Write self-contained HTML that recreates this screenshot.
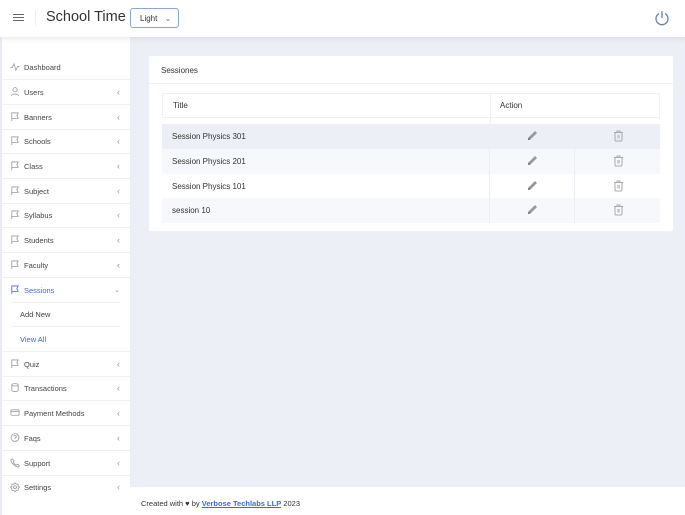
<!DOCTYPE html>
<html><head><meta charset="utf-8"><style>
*{box-sizing:border-box;margin:0;padding:0}
body{width:685px;height:515px;overflow:hidden;background:#eceff6;font-family:"Liberation Sans",sans-serif;position:relative;color:#333}
.hdr{position:absolute;left:0;top:0;width:685px;height:37px;background:#fff;box-shadow:0 2px 6px rgba(0,0,0,.08);z-index:2}
.side{position:absolute;left:2px;top:37px;width:128px;height:478px;background:#fff}
.it{position:absolute;left:2px;width:118px;height:24px;font-size:7.5px;color:#444;display:flex;align-items:center}
.it .ic{position:absolute;left:8px;top:7px;width:10px;height:10px}
.it .t{position:absolute;left:22px}
.it .ch{position:absolute;right:0;color:#999;font-size:9px}
.ln{position:absolute;left:12px;width:108px;height:1px;background:#f0f0f3}
.card{position:absolute;left:149px;top:56px;width:524px;height:175px;background:#fff;border-radius:2px}
.row{position:absolute;left:162px;width:498px;font-size:8px;color:#333}
.row span{position:absolute;left:10px;top:8px}
.foot{position:absolute;left:130px;top:487px;width:555px;height:28px;background:#fff;font-size:7.5px;color:#333;padding:12px 0 0 11px}
</style></head><body>
<div class="hdr">
 <div style="position:absolute;left:13px;top:14px;width:11px;height:1.3px;background:#666;box-shadow:0 3px 0 #666,0 6px 0 #666"></div>
 <div style="position:absolute;left:35px;top:10px;width:1px;height:16px;background:#eee"></div>
 <div style="position:absolute;left:46px;top:9px;font-size:14.5px;color:#333">School Time</div>
 <div style="position:absolute;left:130px;top:8px;width:49px;height:20px;border:1px solid #8aa4e8;border-radius:3px;font-size:8px;padding:5px 0 0 9px;color:#333">Light <span style="margin-left:5px;color:#777">⌄</span></div>
 <svg style="position:absolute;left:654px;top:10px" width="16" height="16" viewBox="0 0 16 16" fill="none" stroke="#6b7fa8" stroke-width="1.3" stroke-linecap="round"><path d="M8 1.5v6"/><path d="M4.5 3.8a6 6 0 1 0 7 0"/></svg>
</div>
<div class="side"></div>
<div style="position:absolute;left:0;top:37px;width:2px;height:478px;background:#e8ebf2"></div>
<div id="nav"></div>
<div class="card">
 <div style="position:absolute;left:12px;top:10px;font-size:8px;color:#333">Sessiones</div>
 <div style="position:absolute;left:0;top:27px;width:524px;height:1px;background:#f1f2f6"></div>
</div>
<div class="row" style="top:93px;height:25px;border:1px solid #f0f1f5;background:#fff"><span style="top:7px">Title</span><span style="left:337px;top:7px">Action</span><div style="position:absolute;left:327px;top:0;width:1px;height:31px;background:#f0f1f5"></div></div>
<div class="row" style="top:124px;height:25px;background:#eceff5"><span>Session Physics 301</span></div>
<div class="row" style="top:149px;height:25px;background:#f7f8fb"><span>Session Physics 201</span></div>
<div class="row" style="top:174px;height:24px;background:#fff"><span>Session Physics 101</span></div>
<div class="row" style="top:198px;height:25px;background:#f7f8fb"><span>session 10</span></div>
<div style="position:absolute;left:489px;top:124px;width:1px;height:99px;background:#eceef3"></div>
<div style="position:absolute;left:574px;top:149px;width:1px;height:74px;background:#eceef3"></div>
<div id="icons"></div>
<div class="foot">Created with ♥ by <a style="color:#3f6ad8;font-weight:bold;text-decoration:underline">Verbose Techlabs LLP</a> 2023</div>
<script>
var items=[["Dashboard",67,"pulse",0],["Users",92,"user",1],["Banners",117,"flag",1],["Schools",141,"flag",1],["Class",166,"flag",1],["Subject",191,"flag",1],["Syllabus",215,"flag",1],["Students",240,"flag",1],["Faculty",265,"flag",1],["Sessions",290,"flag",2],["Add New",314,"",3],["View All",339,"",4],["Quiz",364,"flag",1],["Transactions",388,"db",1],["Payment Methods",413,"card",1],["Faqs",438,"q",1],["Support",463,"ph",1],["Settings",487,"gear",1]];
var P={pulse:'<path d="M0 6h2l2-4 2 7 2-4h2"/>',user:'<circle cx="5" cy="3" r="2.3"/><path d="M1 10c0-3 8-3 8 0"/>',flag:'<path d="M1.5 10V1h7l-1.5 3 1.5 3h-7"/>',db:'<ellipse cx="5" cy="2" rx="3.5" ry="1.3"/><path d="M1.5 2v6c0 1.7 7 1.7 7 0V2"/>',card:'<rect x="0.5" y="2" width="9" height="6" rx="1"/><path d="M0.5 4h9"/>',q:'<circle cx="5" cy="5" r="4.3"/><path d="M3.6 3.8a1.4 1.4 0 1 1 1.4 1.6V6.5M5 7.8v.2"/>',ph:'<path d="M2 1l2 2-1 1.5c.8 1.5 1.8 2.5 3.3 3.3L7.8 6.8l2 2L8.5 10C5 9.5.5 5 0.5 2.2Z"/>',gear:'<path d="M5 0.8l1.3 1.5 2 .1.2 2 1.4 1.3-1.4 1.4-.2 2-2 .1L5 10.7 3.7 9.2l-2-.1-.2-2L.1 5.8l1.4-1.4.2-2 2-.1z"/><circle cx="5" cy="5.7" r="1.6"/>'};
var h='';
items.forEach(function(it,i){var top=it[1]-12;var col=it[3]==2||it[3]==4?'#3f6ad8':'#444';
h+='<div class="it" style="top:'+top+'px;color:'+col+'">';
if(it[2])h+='<svg class="ic" viewBox="0 0 10 11" fill="none" stroke="'+(it[3]==2?'#3f6ad8':'#999')+'" stroke-width="0.9">'+P[it[2]]+'</svg>';
h+='<span class="t" style="'+(it[3]>=3?'left:18px':'')+'">'+it[0]+'</span>';
if(it[3]==1)h+='<span class="ch">‹</span>';if(it[3]==2)h+='<span class="ch" style="font-size:7px">⌄</span>';
h+='</div>';
if(i<items.length-1)h+='<div class="ln" style="top:'+(top+24)+'px;left:'+(it[3]>=2&&it[3]<4?'12px':'2px')+';width:'+(it[3]>=2&&it[3]<4?'108px':'128px')+'"></div>';});
document.getElementById('nav').innerHTML=h;
var ic='';[136,161,186,210].forEach(function(y){
ic+='<svg style="position:absolute;left:527px;top:'+(y-6)+'px" width="11" height="11" viewBox="0 0 11 11"><path d="M1 10l.6-2.6L8 1l2 2-6.4 6.4z" fill="#999"/><path d="M1 10l.6-2.6 2 2z" fill="#666"/></svg>';
ic+='<svg style="position:absolute;left:613px;top:'+(y-6)+'px" width="11" height="12" viewBox="0 0 11 12" fill="none" stroke="#aaa" stroke-width="1"><path d="M1 2.5h9M4 2.5V1h3v1.5"/><rect x="2" y="2.5" width="7" height="8.5" rx="1"/><rect x="4" y="5" width="3" height="3.5" fill="#ccc" stroke="none"/></svg>';});
document.getElementById('icons').innerHTML=ic;
</script>
</body></html>
